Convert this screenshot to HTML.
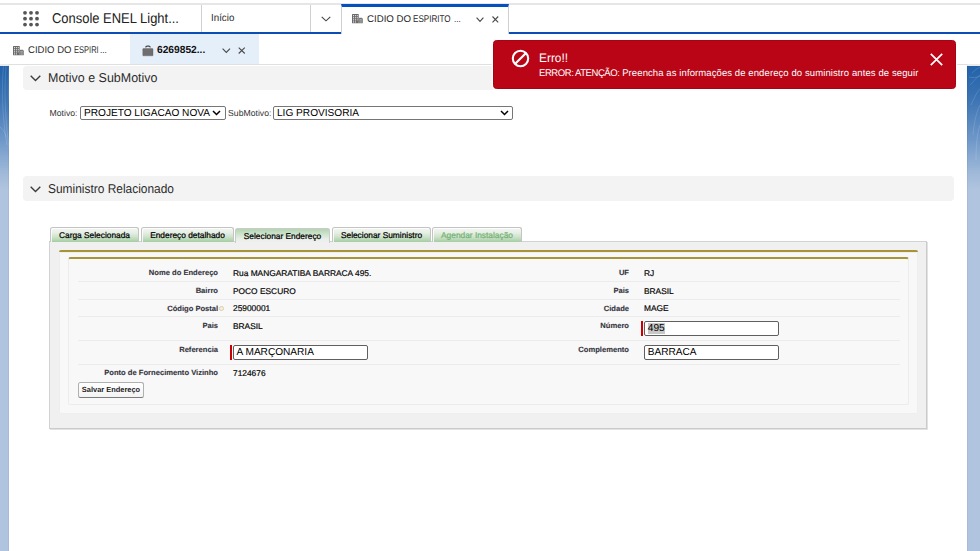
<!DOCTYPE html>
<html lang="pt-BR">
<head>
<meta charset="utf-8">
<title>Console ENEL Lightning</title>
<style>
*{box-sizing:border-box;margin:0;padding:0}
html,body{width:980px;height:551px;overflow:hidden}
body{position:relative;text-rendering:geometricPrecision;background:#b0c4df;font-family:"Liberation Sans",Arial,sans-serif;color:#181818}
.abs{position:absolute}
.dots{letter-spacing:-0.4px}
.t{position:absolute;white-space:nowrap;line-height:1;transform-origin:0 50%}
/* background band */
#band{left:0;top:65px;width:980px;height:125px;background:linear-gradient(to bottom,#2162a9 0,#3d74b4 28%,#6f98c9 60%,#a2bbda 88%,#b0c4df 100%)}
/* header */
#hdr{left:0;top:0;width:980px;height:34px;background:#fff}
#hdr-line{left:0;top:3px;width:980px;height:2px;background:#e6e6e6}
#hdr-blue{left:0;top:32px;width:980px;height:2px;background:#0a4db5}
.vsep{position:absolute;top:5px;width:1px;height:27px;background:#d0d0d0}
#tab-act{left:341px;top:4px;width:168px;height:30px;background:#fff;border-left:1px solid #cfcfcf;border-right:1px solid #cfcfcf;border-top:3px solid #0450bf}
/* subtabs */
#sub{left:0;top:34px;width:980px;height:30px;background:#fff}
#sub-line{left:0;top:64px;width:980px;height:1.500px;background:#ebebeb}
#sub-act{left:129.700px;top:34px;width:129.300px;height:30.300px;background:#e5effa}
/* page */
#page{left:9.300px;top:65px;width:958px;box-shadow:0 0 1px rgba(0,0,0,.25);height:486px;background:#fff}
.sec{position:absolute;left:23px;width:931px;height:24.300px;background:#f3f3f3;border-radius:4px}
.sec .t{left:25px;top:6.800px;font-size:12.800px;color:#2b2b2b}
.sec svg{position:absolute;left:7px;top:9.500px}
/* toast */
#toast{left:493.400px;top:40px;width:462.400px;height:48.700px;background:#ba0517;border:1px solid #a40414;border-radius:3.500px;color:#fff;box-shadow:0 0 0 1.300px #fff}
/* classic */
.lbl{font-size:8.700px;color:#333}
.sel{position:absolute;top:105.700px;height:14.300px;border:1px solid #767676;border-radius:2px;background:#fff}
.sel .t{left:3px;top:2px;font-size:10.12px;color:#000}
.sel svg{position:absolute;right:3.500px;top:3.300px}
.tab{position:absolute;top:227.400px;height:14.200px;border:1px solid #c4c4c4;border-bottom:none;border-radius:2.500px 2.500px 0 0;background:linear-gradient(to bottom,#f4f6f3 0,#e6efe4 35%,#c9e0c7 68%,#a3cea0 100%);box-shadow:inset 1px 1px 0 rgba(255,255,255,.8);font-size:8.350px;text-align:center;line-height:15.200px;color:#000;white-space:nowrap;-webkit-text-stroke:.22px #000}
.tab.on{background:linear-gradient(to bottom,#b2d6b0 0,#cfe3cd 38%,#e9efe8 72%,#f0f0f0 100%);border-color:#cbcbcb;height:14.600px;top:228px;line-height:15.600px;box-shadow:none}
.tab.dis{color:#74b274;-webkit-text-stroke:.22px #74b274}
#panel{left:49px;top:241px;width:878px;height:188px;background:#f0f0f0;border:1px solid #cbcbcb;border-left-color:#d2d2d2;border-top-color:#d2d2d2;box-shadow:1px 1px 0 #e2e2e2}
#pb1{left:58.700px;top:249.600px;width:859.600px;height:164.400px;background:#f8f8f8;border-top:2px solid #a89437;border-radius:2px;box-shadow:0 0 0 1px #eee inset}
#pb2{left:68px;top:256.900px;width:841px;height:148.500px;background:#f8f8f8;border:1px solid #ececec;border-top:2.300px solid #a99539;border-radius:2.500px}
.hl{position:absolute;left:78px;width:822px;height:1px;background:#ececec}
.l{position:absolute;white-space:nowrap;line-height:1;font-size:7.600px;font-weight:bold;color:#35353f;text-align:right;-webkit-text-stroke:.12px #35353f}
.l.a{right:762px}
.l.b{right:351px}
.v{position:absolute;white-space:nowrap;line-height:1;font-size:8.37px;color:#000;-webkit-text-stroke:.18px #000}
.v.a{left:233px}
.v.b{left:644px}
.inp{position:absolute;height:15px;border:1px solid #5f5f5f;border-radius:2px;background:#fff;font-size:10.1px;line-height:13px;padding-left:2.5px;color:#000;white-space:nowrap}
.req{position:absolute;width:2px;height:15px;background:#c00}
#btn{left:78px;top:382px;width:66px;height:16px;border:1px solid #b0b0b0;border-bottom-color:#7c7c7c;border-radius:2.500px;background:linear-gradient(#fff,#f3f3f3);font-size:7.450px;font-weight:bold;color:#1c1c1c;text-align:center;line-height:14px;white-space:nowrap}
</style>
</head>
<body>
<div class="abs" id="band"></div>
<svg class="abs" style="left:0;top:65px" width="980" height="114" viewBox="0 0 980 114"><g fill="none" stroke="#fff" stroke-opacity=".2" stroke-width=".7"><path d="M3.500 0C1.500 25 2 50 7 80M6 0C4 28 5 55 10 90M9 0C8 20 8 30 10 45M0 62c3 2 5 5 6 10"/><path d="M972 8c3-3 6-5 8-6M970 20c4-4 7-8 10-10M971 40c3-6 5-12 9-16M973 70c1-12 3-22 7-30M976 95c0-15 1-25 4-35M969 12c3 1 7 1 11-1"/></g></svg>

<!-- global header -->
<div class="abs" id="hdr"></div>
<div class="abs" id="hdr-line"></div>
<div class="abs" id="hdr-blue"></div>
<svg class="abs" style="left:21.700px;top:9.700px" width="18" height="18" viewBox="0 0 18 18"><g fill="#565656"><circle cx="3" cy="2.8" r="1.900"/><circle cx="9" cy="2.8" r="1.900"/><circle cx="15" cy="2.8" r="1.900"/><circle cx="3" cy="8.7" r="1.900"/><circle cx="9" cy="8.7" r="1.900"/><circle cx="15" cy="8.7" r="1.900"/><circle cx="3" cy="14.6" r="1.900"/><circle cx="9" cy="14.6" r="1.900"/><circle cx="15" cy="14.6" r="1.900"/></g></svg>
<div class="t" id="appname" style="left:51.5px;top:12px;font-size:14.2px;transform:scaleX(.913);color:#222">Console ENEL Light...</div>
<div class="vsep" style="left:201px"></div>
<div class="t" id="inicio" style="left:210.5px;top:14.200px;font-size:10.3px;transform:scaleX(.947);color:#2a2a2a">Início</div>
<div class="vsep" style="left:310px"></div>
<svg class="abs" style="left:321px;top:16px" width="10" height="6" viewBox="0 0 10 6"><path d="M0.7 0.8 L5 4.8 L9.3 0.8" fill="none" stroke="#444" stroke-width="1.1"/></svg>
<div class="abs" id="tab-act"></div>
<svg class="abs ico-b" style="left:352px;top:14px" width="11" height="9.500" viewBox="0 0 11 9.500"><rect x="0" y="0" width="6.700" height="9.300" rx=".5" fill="#6a6a6a"/><path d="M6.500 9.300V5.200c0-.9.600-1.500 1.400-1.500h1.500c.8 0 1.400.6 1.400 1.500v4.100z" fill="#777"/><g fill="#fff"><rect x="1" y="1.100" width=".9" height="1.100"/><rect x="2.900" y="1.100" width=".9" height="1.100"/><rect x="4.800" y="1.100" width=".9" height="1.100"/><rect x="1" y="3.200" width=".9" height="1.100"/><rect x="2.900" y="3.200" width=".9" height="1.100"/><rect x="4.800" y="3.200" width=".9" height="1.100"/><rect x="1" y="5.300" width=".9" height="1.100"/><rect x="2.900" y="5.300" width=".9" height="1.100"/><rect x="1" y="7.400" width=".9" height="1.100"/><rect x="2.900" y="7.400" width=".9" height="1.100"/><rect x="4.800" y="5.300" width=".9" height="1.100" opacity=".8"/></g><g stroke="#d0d0d0" stroke-width=".5" fill="none"><path d="M7.400 5.500h2.500M7.400 6.800h2.500M7.400 8.100h2.500"/></g></svg>
<div class="t" id="toptab" style="left:366.600px;top:14.700px;font-size:9.800px;color:#2a2a2a;width:95px;height:10px"><span class="t" style="left:0.00px;top:0;transform:scaleX(0.988)">CIDIO DO</span><span class="t" style="left:46.70px;top:0;transform:scaleX(0.825)">ESPIRITO</span><span class="t" style="left:87.40px;top:0;transform:scaleX(0.820)">...</span></div>
<svg class="abs" style="left:475.800px;top:17px" width="9" height="6" viewBox="0 0 9 6"><path d="M0.600 0.600 L4 4.300 L7.400 0.600" fill="none" stroke="#4a4a4a" stroke-width="1.150"/></svg>
<svg class="abs" style="left:491.500px;top:15.600px" width="7" height="7" viewBox="0 0 7 7"><path d="M0.500 0.500 L6.200 6.300 M6.200 0.500 L0.500 6.300" fill="none" stroke="#4a4a4a" stroke-width="1.100"/></svg>

<!-- subtabs -->
<div class="abs" id="sub"></div>
<div class="abs" id="sub-act"></div>
<div class="abs" id="sub-line"></div>
<svg class="abs" style="left:13px;top:46px" width="11" height="9.500" viewBox="0 0 11 9.500"><rect x="0" y="0" width="6.700" height="9.300" rx=".5" fill="#6a6a6a"/><path d="M6.500 9.300V5.200c0-.9.600-1.500 1.400-1.500h1.500c.8 0 1.400.6 1.400 1.500v4.100z" fill="#777"/><g fill="#fff"><rect x="1" y="1.100" width=".9" height="1.100"/><rect x="2.900" y="1.100" width=".9" height="1.100"/><rect x="4.800" y="1.100" width=".9" height="1.100"/><rect x="1" y="3.200" width=".9" height="1.100"/><rect x="2.900" y="3.200" width=".9" height="1.100"/><rect x="4.800" y="3.200" width=".9" height="1.100"/><rect x="1" y="5.300" width=".9" height="1.100"/><rect x="2.900" y="5.300" width=".9" height="1.100"/><rect x="1" y="7.400" width=".9" height="1.100"/><rect x="2.900" y="7.400" width=".9" height="1.100"/><rect x="4.800" y="5.300" width=".9" height="1.100" opacity=".8"/></g><g stroke="#d0d0d0" stroke-width=".5" fill="none"><path d="M7.400 5.500h2.500M7.400 6.800h2.500M7.400 8.100h2.500"/></g></svg>
<div class="t" id="sub1" style="left:27.800px;top:45.700px;font-size:9.800px;color:#2f2f2f;width:80px;height:10px"><span class="t" style="left:0.00px;top:0;transform:scaleX(0.974)">CIDIO DO</span><span class="t" style="left:46.20px;top:0;transform:scaleX(0.769)">ESPIRI</span><span class="t" style="left:72.40px;top:0;transform:scaleX(0.845)">...</span></div>
<svg class="abs" style="left:141.500px;top:44.500px" width="12" height="12" viewBox="0 0 12 12"><rect x=".8" y="3.600" width="10.200" height="7.200" rx=".6" fill="#6e6e6e" stroke="#5e5e5e" stroke-width=".4"/><path d="M3.800 2.500Q3.800 1.100 5.200 1.100H6.800Q8.200 1.100 8.200 2.500" fill="none" stroke="#444" stroke-width="1.100"/></svg>
<div class="t" id="sub2" style="left:157px;top:45.800px;font-size:10.22px;font-weight:bold;color:#111">6269852...</div>
<svg class="abs" style="left:222.100px;top:48px" width="9" height="6" viewBox="0 0 9 6"><path d="M0.600 0.700 L4.300 4.400 L8 0.700" fill="none" stroke="#4a4a4a" stroke-width="1.150"/></svg>
<svg class="abs" style="left:238px;top:47.300px" width="8" height="8" viewBox="0 0 8 8"><path d="M0.700 0.700 L6.800 6.500 M6.800 0.700 L0.700 6.500" fill="none" stroke="#4a4a4a" stroke-width="1.100"/></svg>

<!-- page body -->
<div class="abs" id="page"></div>

<div class="sec" style="top:65.500px"><svg width="11" height="7" viewBox="0 0 11 7"><path d="M0.700 0.700 L5.500 5.500 L10.300 0.700" fill="none" stroke="#3c3c3c" stroke-width="1.350"/></svg><div class="t" style="transform:scaleX(.974)">Motivo e SubMotivo</div></div>

<div class="t lbl" id="lmot" style="left:49.500px;top:109px">Motivo:</div>
<div class="sel" style="left:80px;width:145.500px"><div class="t">PROJETO LIGACAO NOVA</div><svg width="9" height="6" viewBox="0 0 9 6"><path d="M1 1 L4.500 4.500 L8 1" fill="none" stroke="#000" stroke-width="1.500"/></svg></div>
<div class="t lbl" id="lsub" style="left:228px;top:109px">SubMotivo:</div>
<div class="sel" style="left:273px;width:240px"><div class="t">LIG PROVISORIA</div><svg width="9" height="6" viewBox="0 0 9 6"><path d="M1 1 L4.500 4.500 L8 1" fill="none" stroke="#000" stroke-width="1.500"/></svg></div>

<div class="sec" style="top:176.300px"><svg width="11" height="7" viewBox="0 0 11 7"><path d="M0.700 0.700 L5.500 5.500 L10.300 0.700" fill="none" stroke="#3c3c3c" stroke-width="1.350"/></svg><div class="t" style="transform:scaleX(.932)">Suministro Relacionado</div></div>

<!-- tab panel -->
<div class="abs" id="panel"></div>
<div class="tab" style="left:50px;width:89px">Carga Selecionada</div>
<div class="tab" style="left:141px;width:93px">Endereço detalhado</div>
<div class="tab on" style="left:235px;width:95px">Selecionar Endereço</div>
<div class="tab" style="left:332px;width:99px">Selecionar Suministro</div>
<div class="tab dis" style="left:432px;width:90px">Agendar Instalação</div>

<div class="abs" id="pb1"></div>
<div class="abs" id="pb2"></div>

<div class="hl" style="top:281px"></div>
<div class="hl" style="top:299px"></div>
<div class="hl" style="top:316px"></div>
<div class="hl" style="top:340px"></div>
<div class="hl" style="top:364px"></div>

<div class="l a" style="top:269px">Nome do Endereço</div><div class="v a" style="top:268.500px">Rua MANGARATIBA BARRACA 495.</div>
<div class="l a" style="top:287px">Bairro</div><div class="v a" style="top:286.500px">POCO ESCURO</div>
<div class="l a" style="top:304.500px;right:761.800px">Código Postal</div><div class="abs" style="left:219.300px;top:305.800px;width:4.600px;height:5.200px;border:1px solid #dccfae;border-radius:2.300px;background:#f6efdd"></div><div class="v a" style="top:304px">25900001</div>
<div class="l a" style="top:322px">Pais</div><div class="v a" style="top:322px">BRASIL</div>
<div class="l a" style="top:345.500px">Referencia</div>
<div class="req" style="left:230px;top:345px"></div><div class="inp" style="left:233px;top:345px;width:135px">A MARÇONARIA</div>
<div class="l a" style="top:369px">Ponto de Fornecimento Vizinho</div><div class="v a" style="top:368.500px">7124676</div>

<div class="l b" style="top:269px">UF</div><div class="v b" style="top:268.500px">RJ</div>
<div class="l b" style="top:287px">Pais</div><div class="v b" style="top:286.500px">BRASIL</div>
<div class="l b" style="top:304.500px">Cidade</div><div class="v b" style="top:304px">MAGE</div>
<div class="l b" style="top:322px">Número</div>
<div class="req" style="left:641.200px;top:321px"></div><div class="inp" style="left:644.300px;top:321px;width:134.800px"><span style="background:#c8c8c8">495</span></div>
<div class="l b" style="top:345.500px">Complemento</div>
<div class="inp" style="left:644.300px;top:345px;width:134.800px">BARRACA</div>

<div class="abs" id="btn">Salvar Endereço</div>

<!-- toast -->
<div class="abs" id="toast">
<svg class="abs" style="left:16.900px;top:8.200px" width="19" height="19" viewBox="0 0 19 19"><circle cx="9.500" cy="9.500" r="7.700" fill="none" stroke="#fff" stroke-width="2.100"/><path d="M4.200 14.800 L14.800 4.200" stroke="#fff" stroke-width="2.200"/></svg>
<div class="t" id="terr" style="left:44.600px;top:10.500px;font-size:12.200px;transform:scaleX(.975)">Erro!!</div>
<div class="t" id="tmsg" style="left:44.600px;top:28.100px;font-size:9.700px;transform:scaleX(.9804)"><span style="letter-spacing:-0.440px">ERROR: ATENÇÃO:</span><span style="letter-spacing:0.100px"> Preencha as informações de endereço do suministro antes de seguir</span></div>
<svg class="abs" style="left:435.600px;top:11.500px" width="13" height="13" viewBox="0 0 13 13"><path d="M0.800 0.800 L12.200 12.200 M12.200 0.800 L0.800 12.200" stroke="#fff" stroke-width="1.700" fill="none"/></svg>
</div>
</body>
</html>
